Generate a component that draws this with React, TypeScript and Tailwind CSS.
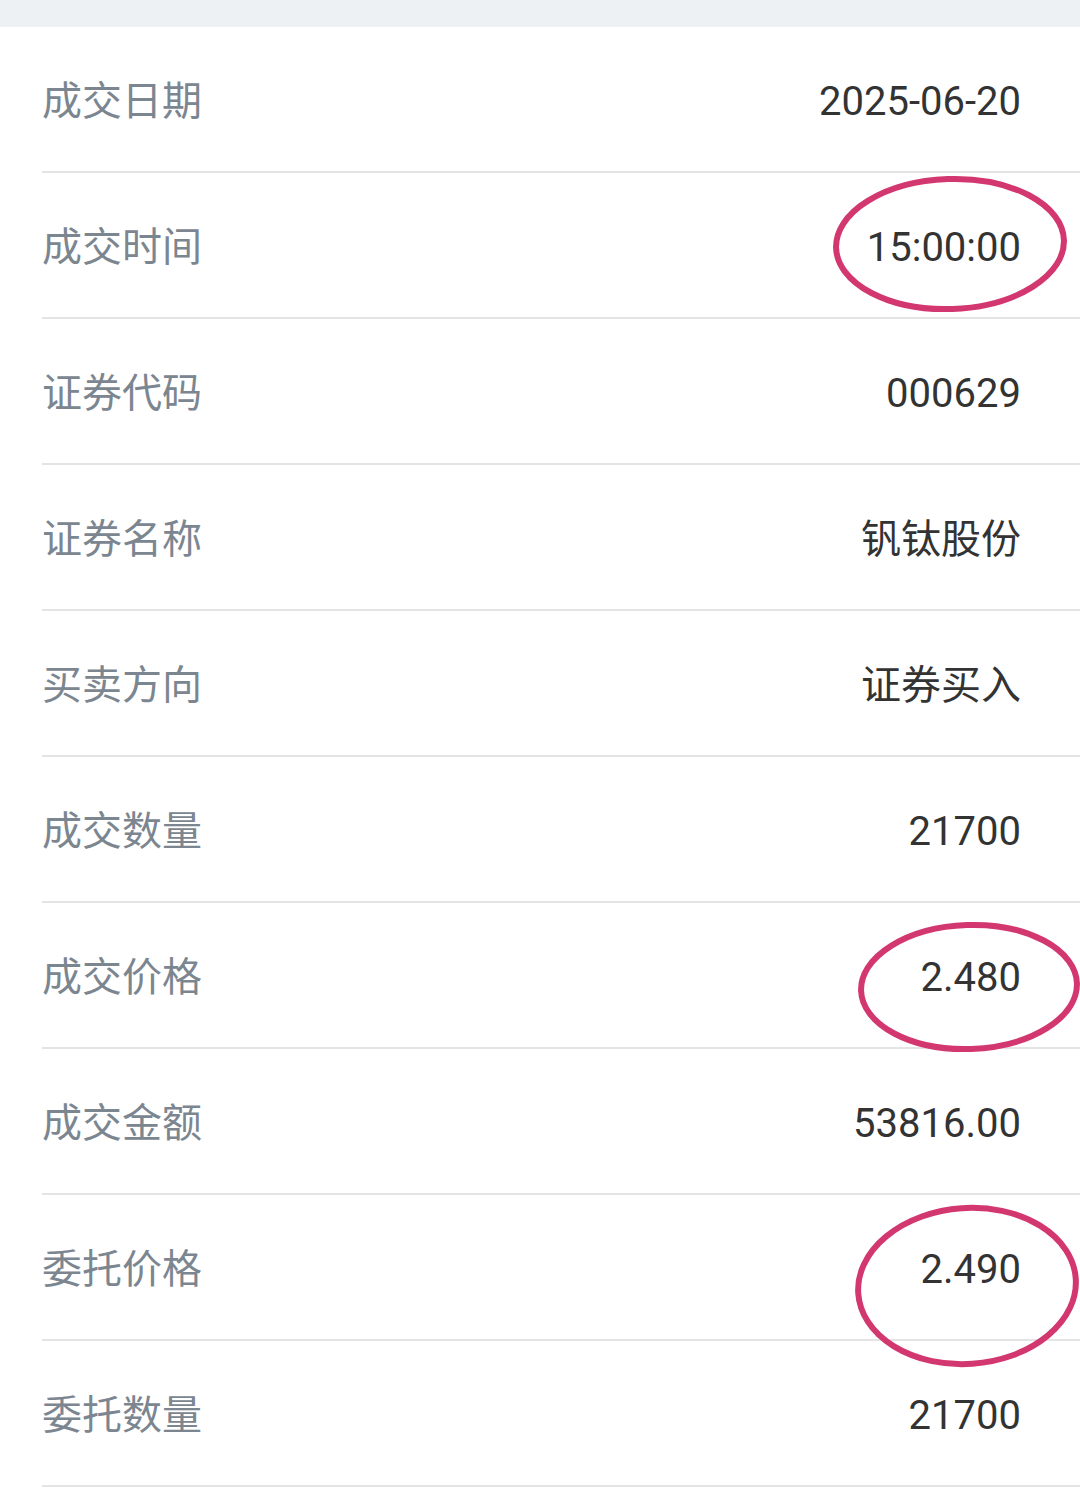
const rows: { label: string; value: string }[] = [
  { label: "成交日期", value: "2025-06-20" },
  { label: "成交时间", value: "15:00:00" },
  { label: "证券代码", value: "000629" },
  { label: "证券名称", value: "钒钛股份" },
  { label: "买卖方向", value: "证券买入" },
  { label: "成交数量", value: "21700" },
  { label: "成交价格", value: "2.480" },
  { label: "成交金额", value: "53816.00" },
  { label: "委托价格", value: "2.490" },
  { label: "委托数量", value: "21700" },
];

function Row({ label, value }: { label: string; value: string }) {
  return (
    <div className="ml-[42px] h-[146px] flex items-center justify-between border-b-2 border-[#e4e4e4] pt-[6px] pr-[59px]">
      <span className="text-[40px] leading-none text-[#7b8690] font-['Roboto','Noto_Sans_CJK_SC',sans-serif]">
        {label}
      </span>
      <span className="text-[40px] leading-none text-[#333333] font-['Roboto','Noto_Sans_CJK_SC',sans-serif]">
        {value}
      </span>
    </div>
  );
}

export default function App() {
  return (
    <div className="relative w-[1080px] min-h-[1506px] bg-white overflow-hidden">
      <div className="h-[27px] bg-[#eef1f4]" />
      <div>
        {rows.map((r) => (
          <Row key={r.label} label={r.label} value={r.value} />
        ))}
      </div>

      {/* hand-drawn annotation circles */}
      <svg
        className="absolute left-0 top-0 pointer-events-none"
        width="1080"
        height="1506"
        viewBox="0 0 1080 1506"
        fill="none"
      >
        <ellipse cx="950" cy="244" rx="114" ry="65" stroke="#d3376f" strokeWidth="6" transform="rotate(-2 950 244)" />
        <ellipse cx="969" cy="987" rx="108" ry="62" stroke="#d3376f" strokeWidth="6" transform="rotate(-2 969 987)" />
        <ellipse cx="967" cy="1286" rx="109" ry="78" stroke="#d3376f" strokeWidth="6" transform="rotate(-4 967 1286)" />
      </svg>
    </div>
  );
}
